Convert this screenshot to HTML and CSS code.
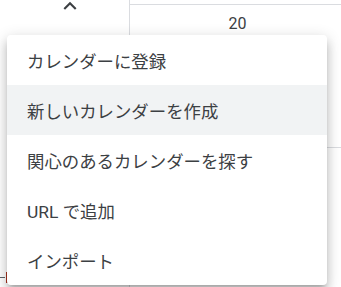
FILE: index.html
```html
<!DOCTYPE html>
<html lang="ja">
<head>
    <meta charset="UTF-8">
    <meta name="viewport" content="width=device-width, initial-scale=1.0">
    <title>カレンダー</title>
    <link rel="stylesheet" href="styles.css">
</head>
<body>
    <div class="calendar">
        <div class="side-column">
            <div class="collapse-toggle">
                <svg class="chevron" viewBox="0 0 24 24" width="26" height="26">
                    <path d="M12 8l-6 6 1.41 1.41L12 10.83l4.59 4.58L18 14z"/>
                </svg>
            </div>
            <div class="time-marker">
                <span class="time-dash"></span>
                <span class="now-line"></span>
            </div>
        </div>
        <div class="day-column">
            <div class="day-header">
                <div class="day-number">20</div>
            </div>
            <div class="day-grid">
                <div class="grid-row"></div>
            </div>
        </div>
    </div>

    <div class="menu">
        <div class="menu-item">カレンダーに登録</div>
        <div class="menu-item active">新しいカレンダーを作成</div>
        <div class="menu-item">関心のあるカレンダーを探す</div>
        <div class="menu-item">URL で追加</div>
        <div class="menu-item">インポート</div>
    </div>
</body>
</html>
```

FILE: styles.css
```css
body {
    margin: 0;
    font-family: Roboto, 'Noto Sans CJK JP', sans-serif;
    background-color: #ffffff;
    color: #3c4043;
    overflow: hidden;
}
.calendar {
    display: flex;
    height: 287px;
}
.side-column {
    width: 129px;
    border-right: 1px solid #dadce0;
    display: flex;
    flex-direction: column;
    justify-content: space-between;
}
.collapse-toggle {
    display: flex;
    justify-content: center;
    margin-top: -7px;
    padding-left: 11px;
}
.chevron {
    fill: #3c4043;
}
.time-marker {
    display: flex;
    align-items: center;
    gap: 1px;
    margin-bottom: 4px;
}
.time-dash {
    width: 5px;
    height: 1px;
    background-color: #5f6368;
}
.now-line {
    width: 2px;
    height: 11px;
    background-color: #a8331f;
}
.day-column {
    flex: 1;
    padding-top: 4px;
    display: flex;
    flex-direction: column;
}
.day-header {
    border-top: 1px solid #dadce0;
    height: 143px;
    box-sizing: border-box;
    padding-top: 9px;
    padding-left: 4px;
}
.day-number {
    text-align: center;
    font-size: 16px;
    line-height: 20px;
}
.day-grid {
    flex: 1;
    border-top: 1px solid #dadce0;
}
.menu {
    position: absolute;
    top: 35px;
    left: 7px;
    width: 320px;
    background: #ffffff;
    border-radius: 4px;
    box-shadow: 0 5px 5px -3px rgba(0,0,0,0.2), 0 8px 10px 1px rgba(0,0,0,0.14), 0 3px 14px 2px rgba(0,0,0,0.12);
}
.menu-item {
    height: 50px;
    display: flex;
    align-items: center;
    padding-left: 20px;
    font-size: 17.4px;
    color: #3c4043;
}
.menu-item.active {
    background-color: #f1f3f4;
}
```
